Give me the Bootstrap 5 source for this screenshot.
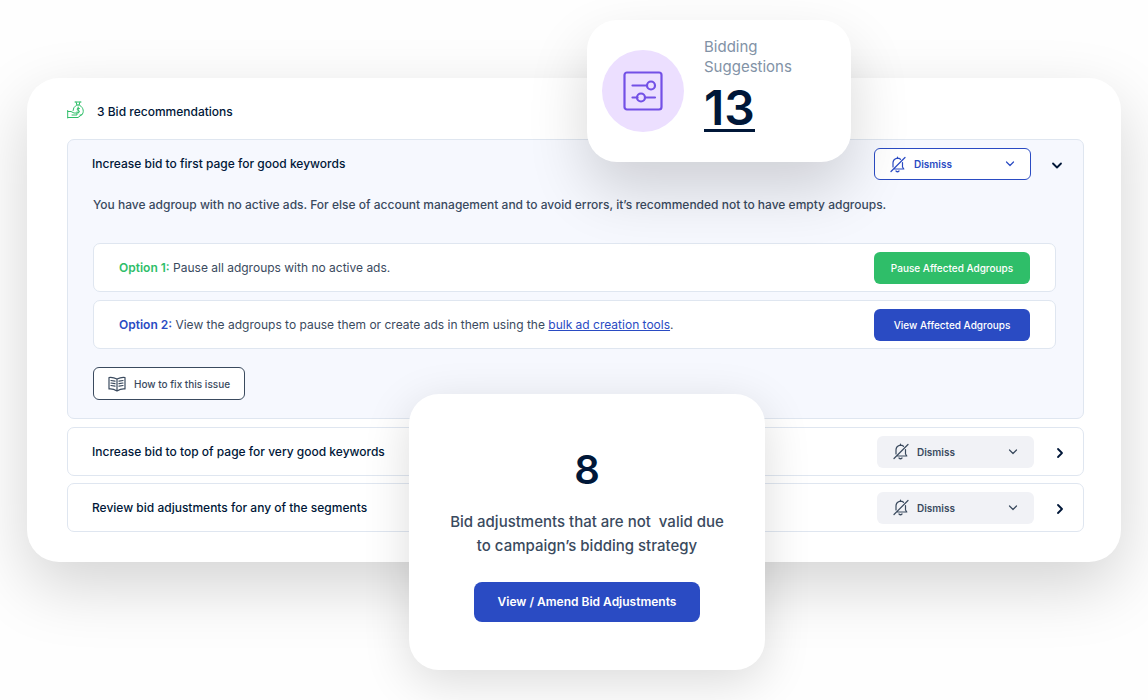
<!DOCTYPE html>
<html lang="en">
<head>
<meta charset="utf-8">
<meta name="viewport" content="width=device-width, initial-scale=1">
<title>Bid recommendations</title>
<link rel="stylesheet" href="https://cdn.jsdelivr.net/npm/bootstrap@5.3.0/dist/css/bootstrap.min.css">
<style>
  :root { --navy: #001738; --slate: #3a4a5e; --blue: #2a4bc3; --green: #2fbe69; --line: #dfe6f0; }
  body { font-family: Inter, "Liberation Sans", sans-serif; font-size: 12px; line-height: 16px; color: var(--slate); background: #fefefe; overflow-x: hidden; }
  .page-wrap { padding: 78px 27px 138px; }
  .panel { background: #fff; border-radius: 32px; padding: 0 37px 30px 40px; box-shadow: 0 24px 64px rgba(0, 0, 0, .17); }
  .panel-head { height: 61px; padding-top: 7px; gap: 13px; }
  .title { font-size: 12px; line-height: 16px; font-weight: 500; color: var(--navy); margin: 0; }
  .item { background: #fff; border: 1px solid var(--line); border-radius: 7px; margin-bottom: 7px; }
  .item-open { background: #f6f8fe; margin-bottom: 8px; }
  .item-head { height: 47px; padding: 0 12px 0 24px; }
  .item-open .item-head { height: 48px; padding-right: 15px; }
  .item-body { padding: 9px 27px 18px 25px; }
  .lead-in { font-weight: 500; margin: 0 0 30px; }
  .option { background: #fff; border: 1px solid var(--line); border-radius: 7px; height: 49px; padding: 0 25px; margin-bottom: 8px; }
  .option a { color: var(--blue); }
  .t-green { color: var(--green); }
  .t-blue { color: var(--blue); }
  .btn { font-size: 10px; line-height: 14px; font-weight: 500; border-radius: 6px; color: #fff; }
  .btn-act { width: 156px; height: 32px; padding: 0; }
  .btn-green { background: var(--green); }
  .btn-blue { background: var(--blue); }
  .btn-dismiss { width: 157px; height: 32px; padding: 0 15px; gap: 8px; font-weight: 600; color: var(--slate); background: #f1f2f6; }
  .btn-dismiss.on { color: var(--blue); background: #fff; border-color: var(--blue); }
  .btn-toggle { width: 22px; height: 22px; padding: 0; border: 0; margin-left: 15px; color: var(--navy); }
  .btn-howto { height: 33px; padding: 0 14px; gap: 8px; margin-top: 18px; background: #fff; border-color: var(--slate); color: var(--slate); }
  .btn:hover { opacity: .9; }
  .float-card { position: absolute; background: #fff; border-radius: 30px; }
  .float-stat { top: -58px; right: 270px; width: 264px; height: 142px; padding: 16px 15px; gap: 20px; box-shadow: 0 28px 60px rgba(0, 0, 0, .16); }
  .float-adjust { bottom: -108px; left: calc(50% - 165px); width: 356px; height: 276px; padding-top: 4px; box-shadow: 0 12px 48px rgba(0, 0, 0, .14); }
  .disc { width: 82px; height: 82px; border-radius: 50%; background: #ecdfff; color: #7350e6; margin-top: 14px; }
  .stat-label { font-size: 15px; line-height: 20px; color: #8292a6; padding-top: 1px; }
  .stat-num { font-size: 48px; line-height: 42px; font-weight: 600; color: var(--navy); text-decoration: none; border-bottom: 3px solid var(--navy); margin-top: 10px; }
  .big-num { font-size: 40px; line-height: 48px; font-weight: 600; color: var(--navy); }
  .adjust-text { font-size: 15px; line-height: 24px; font-weight: 500; white-space: pre-line; margin: 16px 0 24px; }
  .btn-amend { font-size: 12px; font-weight: 600; width: 226px; height: 40px; padding: 0; border-radius: 8px; }
  svg { fill: none; stroke: currentColor; flex: none; stroke-linecap: round; stroke-linejoin: round; }
</style>
</head>
<body>
<svg class="d-none" aria-hidden="true">
  <symbol id="bell" viewBox="0 0 16 17"><path d="M7.500 1v1.500M3 10V7a4.600 4.600 0 0 1 7.500-3.700M4 13h9.800l-1.300-2V6.500M1 15.500 15 1.500M6 15q1.500 1.500 3 0M3 11v-1"/></symbol>
  <symbol id="down" viewBox="0 0 10 10"><path d="m1.500 3 3.500 3.500L8.500 3"/></symbol>
</svg>
<div class="page-wrap">
<main class="panel position-relative">
  <header class="panel-head d-flex align-items-center">
    <svg class="t-green mb-1" width="17" height="18" viewBox="0 0 17 18" aria-hidden="true"><path d="M8 1h6M9 1l1 3M13 1l-1 3M9.500 4h3M9 4.500Q6 6.500 6 9.500M13 4.500c3.500 2 4.500 7 1.500 9.500H13M12.500 7.500q-2.500-1-2.500.5c0 1.500 2.500 1 2.500 2.500s-2 1.200-2.700.7M11.200 6v6M.7 9.500v7.500M1 10.500h3l3 1.500h3v2H5M1 16.500h10l4-3"/></svg>
    <h1 class="title">3 Bid recommendations</h1>
  </header>
  <section class="item item-open">
    <div class="item-head d-flex align-items-center">
      <h2 class="title me-auto">Increase bid to first page for good keywords</h2>
      <button type="button" class="btn btn-dismiss on d-flex align-items-center"><svg width="16" height="17" stroke-width="1.200" aria-hidden="true"><use href="#bell"/></svg><span class="me-auto">Dismiss</span><svg width="10" height="10" stroke-width="1.2" aria-hidden="true"><use href="#down"/></svg></button>
      <button type="button" class="btn btn-toggle" aria-label="Collapse"><svg width="12" height="12" viewBox="0 0 12 12" stroke-width="1.800"><path d="m2 4.500 4 4 4-4"/></svg></button>
    </div>
    <div class="item-body">
      <p class="lead-in">You have adgroup with no active ads. For else of account management and to avoid errors, it’s recommended not to have empty adgroups.</p>
      <div class="option d-flex align-items-center justify-content-between">
        <span><strong class="fw-semibold t-green">Option 1:</strong> Pause all adgroups with no active ads.</span>
        <button type="button" class="btn btn-act btn-green">Pause Affected Adgroups</button>
      </div>
      <div class="option d-flex align-items-center justify-content-between">
        <span><strong class="fw-semibold t-blue">Option 2:</strong> View the adgroups to pause them or create ads in them using the <a href="#">bulk ad creation tools</a>.</span>
        <button type="button" class="btn btn-act btn-blue">View Affected Adgroups</button>
      </div>
      <button type="button" class="btn btn-howto d-flex align-items-center"><svg width="18" height="16" viewBox="0 0 18 16" stroke-width="1.200" aria-hidden="true"><path d="M9 3Q5 1 1 1.500v11.500q4-.5 8 2 4-2.500 8-2V1.500Q13 1 9 3v12M3 4.500l4 .7M3 7l4 .7M3 9.500l4 .7M15 4.500l-4 .7M15 7l-4 .7M15 9.500l-4 .7"/></svg>How to fix this issue</button>
    </div>
  </section>
  <section class="item">
    <div class="item-head d-flex align-items-center">
      <h2 class="title me-auto">Increase bid to top of page for very good keywords</h2>
      <button type="button" class="btn btn-dismiss d-flex align-items-center"><svg width="16" height="17" stroke-width="1.200" aria-hidden="true"><use href="#bell"/></svg><span class="me-auto">Dismiss</span><svg width="10" height="10" stroke-width="1.2" aria-hidden="true"><use href="#down"/></svg></button>
      <button type="button" class="btn btn-toggle" aria-label="Expand"><svg width="12" height="12" viewBox="0 0 12 12" stroke-width="1.800"><path d="m4 2 4 4-4 4"/></svg></button>
    </div>
  </section>
  <section class="item mb-0">
    <div class="item-head d-flex align-items-center">
      <h2 class="title me-auto">Review bid adjustments for any of the segments</h2>
      <button type="button" class="btn btn-dismiss d-flex align-items-center"><svg width="16" height="17" stroke-width="1.200" aria-hidden="true"><use href="#bell"/></svg><span class="me-auto">Dismiss</span><svg width="10" height="10" stroke-width="1.2" aria-hidden="true"><use href="#down"/></svg></button>
      <button type="button" class="btn btn-toggle" aria-label="Expand"><svg width="12" height="12" viewBox="0 0 12 12" stroke-width="1.800"><path d="m4 2 4 4-4 4"/></svg></button>
    </div>
  </section>

  <aside class="float-card float-stat d-flex">
    <div class="disc d-flex align-items-center justify-content-center">
      <svg width="40" height="40" viewBox="0 0 40 40" stroke-width="2.200" aria-hidden="true"><rect x="1.500" y="1.500" width="37" height="37" rx="2.500"/><path d="M9.500 14.500h14.500M9.500 26.500h5M22 26.500h10"/><circle cx="28" cy="14.500" r="4"/><circle cx="18" cy="26.500" r="4"/></svg>
    </div>
    <div class="d-flex flex-column align-items-start">
      <span class="stat-label">Bidding<br>Suggestions</span>
      <a href="#" class="stat-num">13</a>
    </div>
  </aside>

  <aside class="float-card float-adjust d-flex flex-column align-items-center justify-content-center text-center">
    <div class="big-num">8</div>
    <p class="adjust-text">Bid adjustments that are not&nbsp; valid due
to campaign’s bidding strategy</p>
    <button type="button" class="btn btn-blue btn-amend">View / Amend Bid Adjustments</button>
  </aside>
</main>
</div>
<script src="https://cdn.jsdelivr.net/npm/bootstrap@5.3.0/dist/js/bootstrap.bundle.min.js"></script>
</body>
</html>
